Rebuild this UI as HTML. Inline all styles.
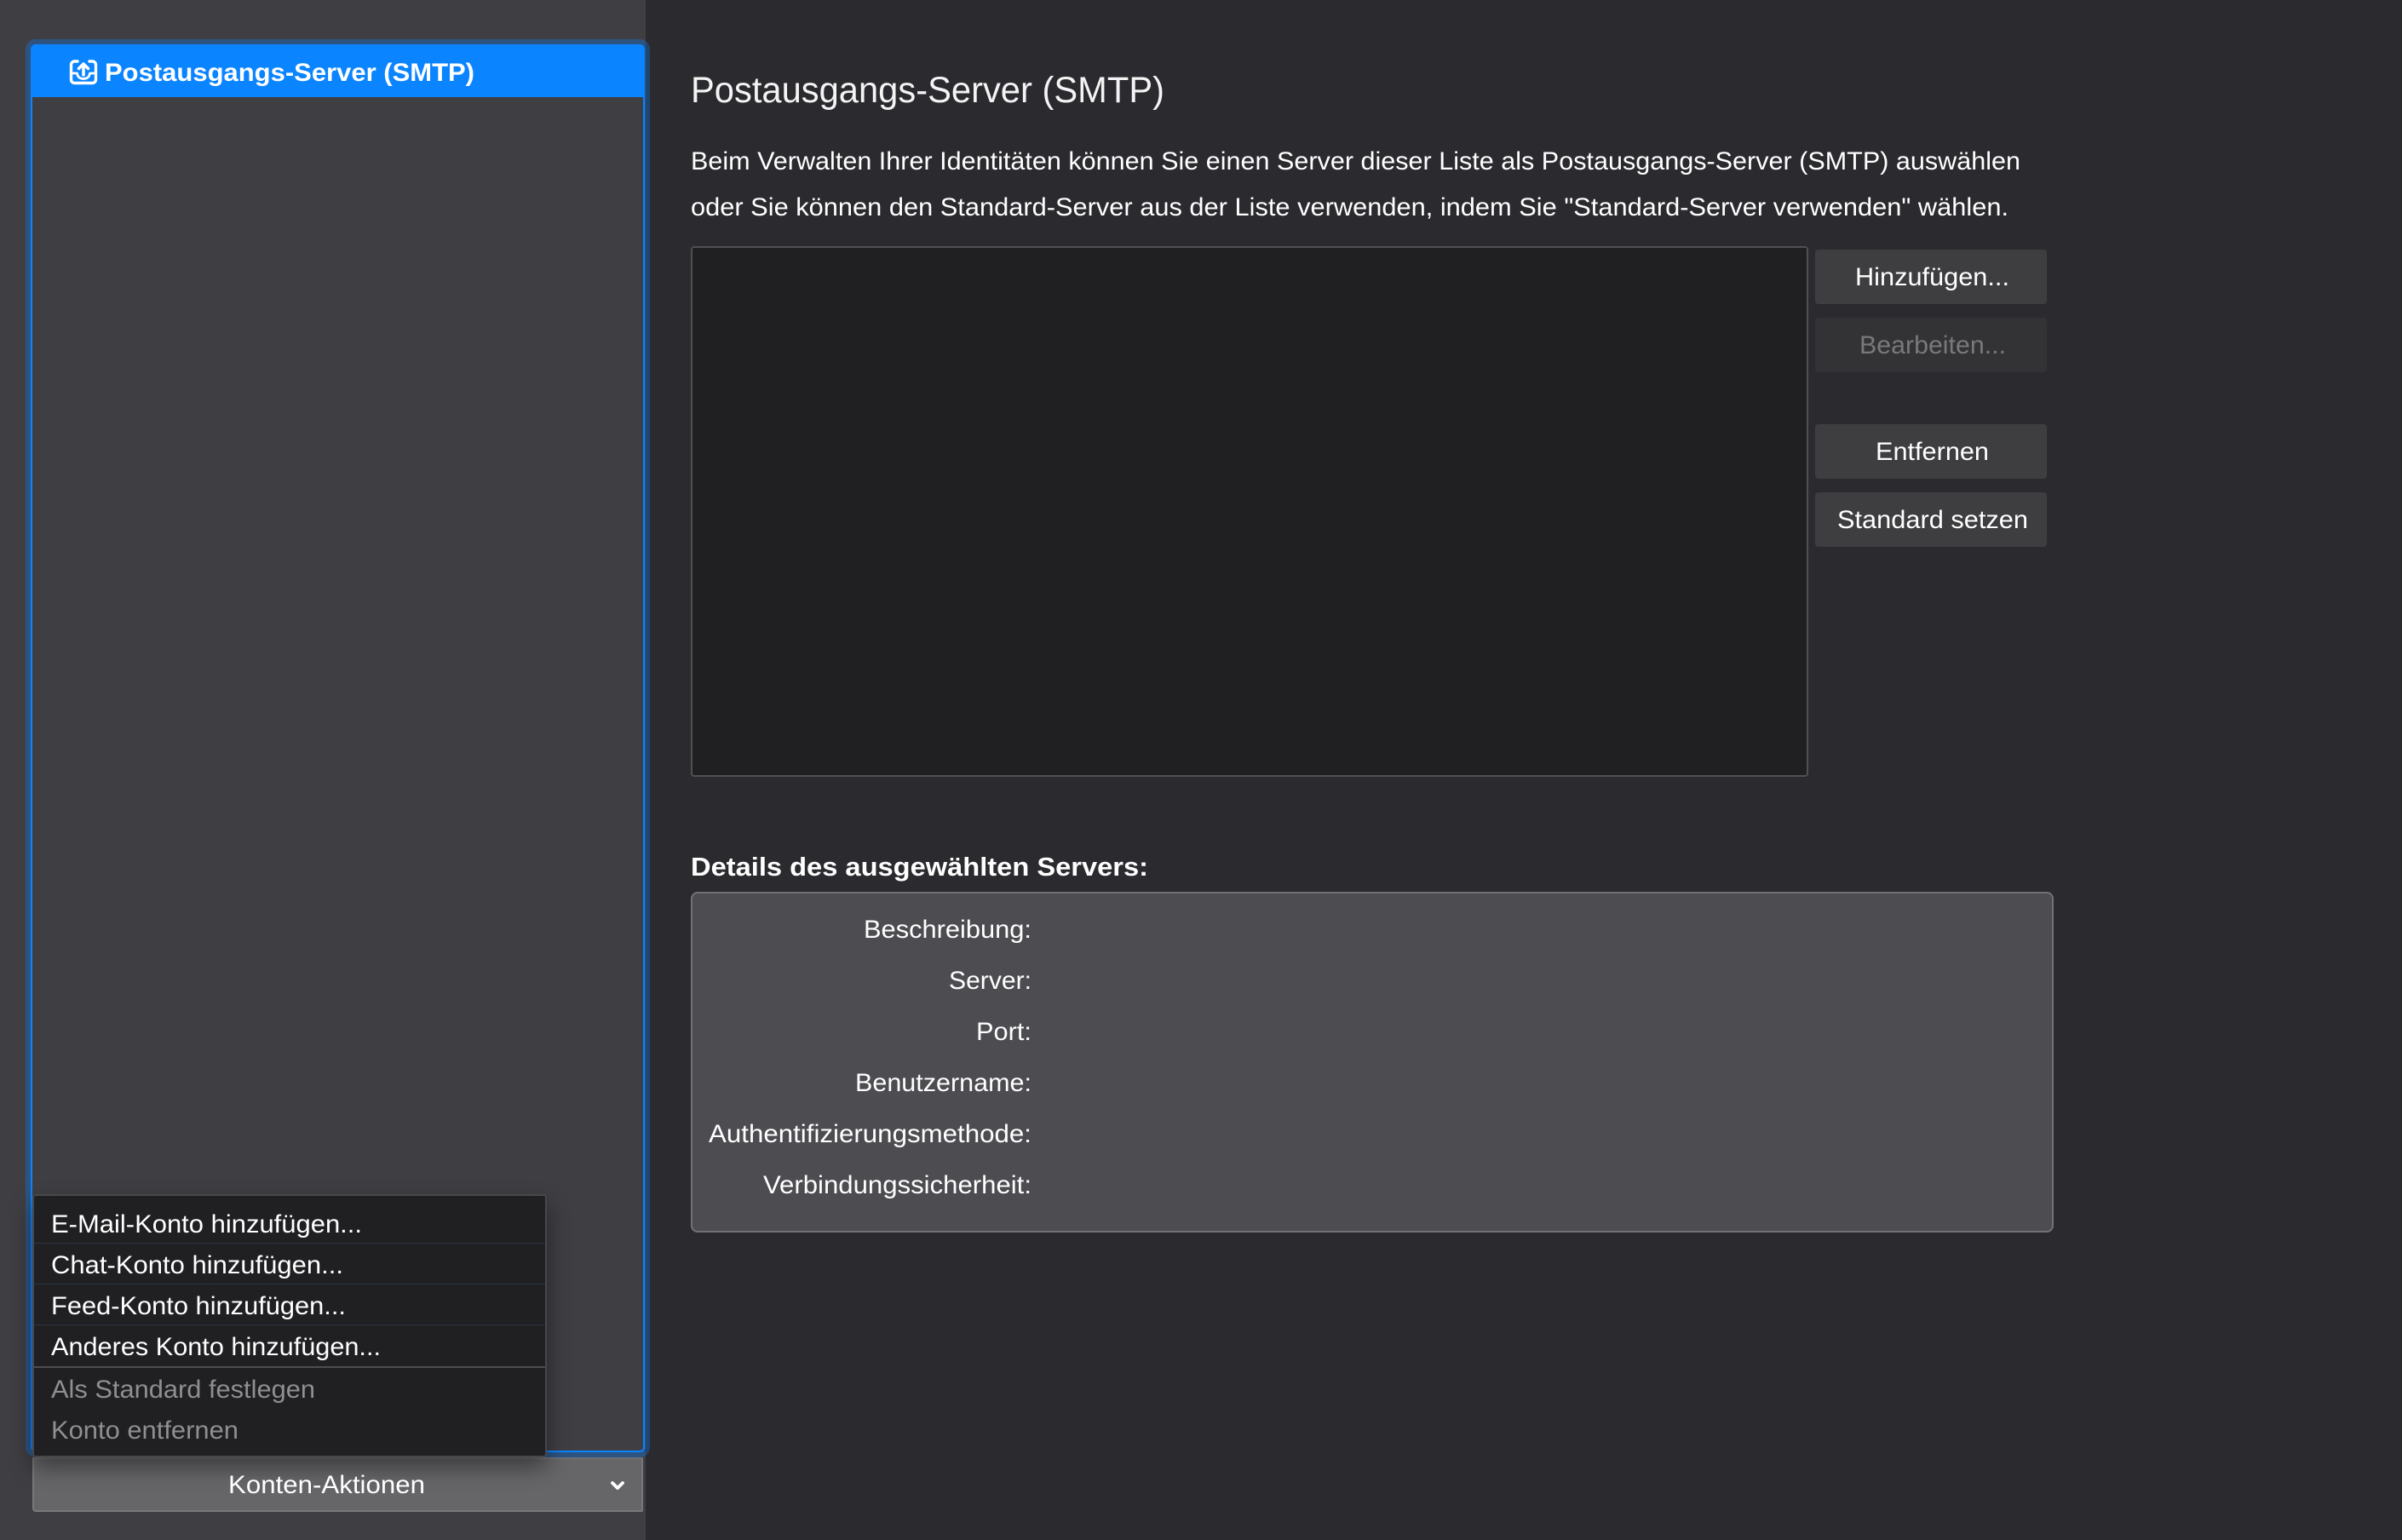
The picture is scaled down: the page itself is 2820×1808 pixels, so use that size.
<!DOCTYPE html>
<html lang="de">
<head>
<meta charset="utf-8">
<title>Postausgangs-Server (SMTP)</title>
<style>
html,body{margin:0;padding:0;width:2820px;height:1808px;overflow:hidden;background:#2b2a2f}
.b{position:absolute;box-sizing:border-box}
svg{position:absolute;left:0;top:0}
text{font-family:"Liberation Sans",sans-serif;fill:#fff;font-size:29.5px}
</style>
</head>
<body>
<div class="b" style="left:0;top:0;width:758px;height:1808px;background:#3f3e43"></div>
<!-- list with focus ring -->
<div class="b" style="left:30px;top:46px;width:733px;height:1665px;border:6px solid rgba(10,132,255,.33);border-radius:12px"></div>
<div class="b" style="left:36px;top:52px;width:721px;height:1653px;border:2px solid #0a84ff;border-radius:6px;background:#3f3e43"></div>
<div class="b" style="left:36px;top:52px;width:721px;height:62px;background:#0a84ff;border-radius:6px 6px 0 0"></div>
<!-- accounts button -->
<div class="b" style="left:38px;top:1711px;width:717px;height:64px;background:#666568;border:2px solid #78787a;border-top-color:#707072;border-radius:0 0 2px 4px"></div>
<!-- menu -->
<div class="b" style="left:38px;top:1402px;width:604px;height:309px;background:#202023;border:2px solid #48484b;border-radius:4px;box-shadow:0 12px 26px rgba(0,0,0,.42)"></div>
<div class="b" style="left:40px;top:1459px;width:600px;height:1px;background:#2a3444"></div>
<div class="b" style="left:40px;top:1507px;width:600px;height:1px;background:#2a3444"></div>
<div class="b" style="left:40px;top:1555px;width:600px;height:1px;background:#2a3444"></div>
<div class="b" style="left:40px;top:1604px;width:600px;height:2px;background:#4d4d50"></div>
<!-- server list -->
<div class="b" style="left:811px;top:289px;width:1312px;height:623px;background:#202023;border:2px solid #505053;border-radius:4px"></div>
<!-- buttons -->
<div class="b" style="left:2131px;top:293px;width:272px;height:64px;background:#3e3e41;border-radius:4px"></div>
<div class="b" style="left:2131px;top:373px;width:272px;height:64px;background:#333336;border-radius:4px"></div>
<div class="b" style="left:2131px;top:498px;width:272px;height:64px;background:#3e3e41;border-radius:4px"></div>
<div class="b" style="left:2131px;top:578px;width:272px;height:64px;background:#3e3e41;border-radius:4px"></div>
<!-- details -->
<div class="b" style="left:811px;top:1047px;width:1600px;height:400px;background:#4d4c51;border:2px solid #727275;border-radius:8px"></div>

<svg width="2820" height="1808" viewBox="0 0 2820 1808" xmlns="http://www.w3.org/2000/svg">
  <!-- outbox icon -->
  <g fill="none" stroke="#fff" stroke-linecap="round" stroke-linejoin="round">
    <path d="M91 72h-3.500a4 4 0 0 0-4 4v17.500a4 4 0 0 0 4 4h21a4 4 0 0 0 4-4V76a4 4 0 0 0-4-4H105" stroke-width="3.400"/>
    <path d="M84 86h6.500c.5 4.500 3.500 6.500 7.500 6.500s7-2 7.500-6.500h6.500" stroke-width="2.800"/>
    <path d="M98 88V75M92.500 80.500L98 75l5.500 5.500" stroke-width="3.600"/>
  </g>
  <text x="123" y="95" font-weight="700" style="font-size:30px" textLength="434" lengthAdjust="spacingAndGlyphs">Postausgangs-Server (SMTP)</text>

  <text x="811" y="120" style="font-size:43px" textLength="556" lengthAdjust="spacingAndGlyphs" fill-opacity=".95">Postausgangs-Server (SMTP)</text>
  <text x="811" y="199" textLength="1561" lengthAdjust="spacingAndGlyphs">Beim Verwalten Ihrer Identitäten können Sie einen Server dieser Liste als Postausgangs-Server (SMTP) auswählen</text>
  <text x="811" y="253" textLength="1547" lengthAdjust="spacingAndGlyphs">oder Sie können den Standard-Server aus der Liste verwenden, indem Sie "Standard-Server verwenden" wählen.</text>

  <text x="2178" y="335" textLength="181" lengthAdjust="spacingAndGlyphs">Hinzufügen...</text>
  <text x="2183" y="415" textLength="172" lengthAdjust="spacingAndGlyphs" style="fill:#79797b">Bearbeiten...</text>
  <text x="2202" y="540" textLength="133" lengthAdjust="spacingAndGlyphs">Entfernen</text>
  <text x="2157" y="620" textLength="224" lengthAdjust="spacingAndGlyphs">Standard setzen</text>

  <text x="811" y="1028" font-weight="700" style="font-size:31px" textLength="537" lengthAdjust="spacingAndGlyphs">Details des ausgewählten Servers:</text>

  <text x="1014" y="1101" textLength="197" lengthAdjust="spacingAndGlyphs">Beschreibung:</text>
  <text x="1114" y="1161" textLength="97" lengthAdjust="spacingAndGlyphs">Server:</text>
  <text x="1146" y="1221" textLength="65" lengthAdjust="spacingAndGlyphs">Port:</text>
  <text x="1004" y="1281" textLength="207" lengthAdjust="spacingAndGlyphs">Benutzername:</text>
  <text x="832" y="1341" textLength="379" lengthAdjust="spacingAndGlyphs">Authentifizierungsmethode:</text>
  <text x="896" y="1401" textLength="315" lengthAdjust="spacingAndGlyphs">Verbindungssicherheit:</text>

  <text x="60" y="1447" textLength="365" lengthAdjust="spacingAndGlyphs">E-Mail-Konto hinzufügen...</text>
  <text x="60" y="1495" textLength="343" lengthAdjust="spacingAndGlyphs">Chat-Konto hinzufügen...</text>
  <text x="60" y="1543" textLength="346" lengthAdjust="spacingAndGlyphs">Feed-Konto hinzufügen...</text>
  <text x="60" y="1591" textLength="387" lengthAdjust="spacingAndGlyphs">Anderes Konto hinzufügen...</text>
  <text x="60" y="1641" textLength="310" lengthAdjust="spacingAndGlyphs" style="fill:#8f8f91">Als Standard festlegen</text>
  <text x="60" y="1689" textLength="220" lengthAdjust="spacingAndGlyphs" style="fill:#8f8f91">Konto entfernen</text>

  <text x="268" y="1753" textLength="231" lengthAdjust="spacingAndGlyphs">Konten-Aktionen</text>
  <path d="M719 1741l6 6 6-6" fill="none" stroke="#fff" stroke-width="3.800" stroke-linecap="round" stroke-linejoin="round"/>
</svg>
</body>
</html>
